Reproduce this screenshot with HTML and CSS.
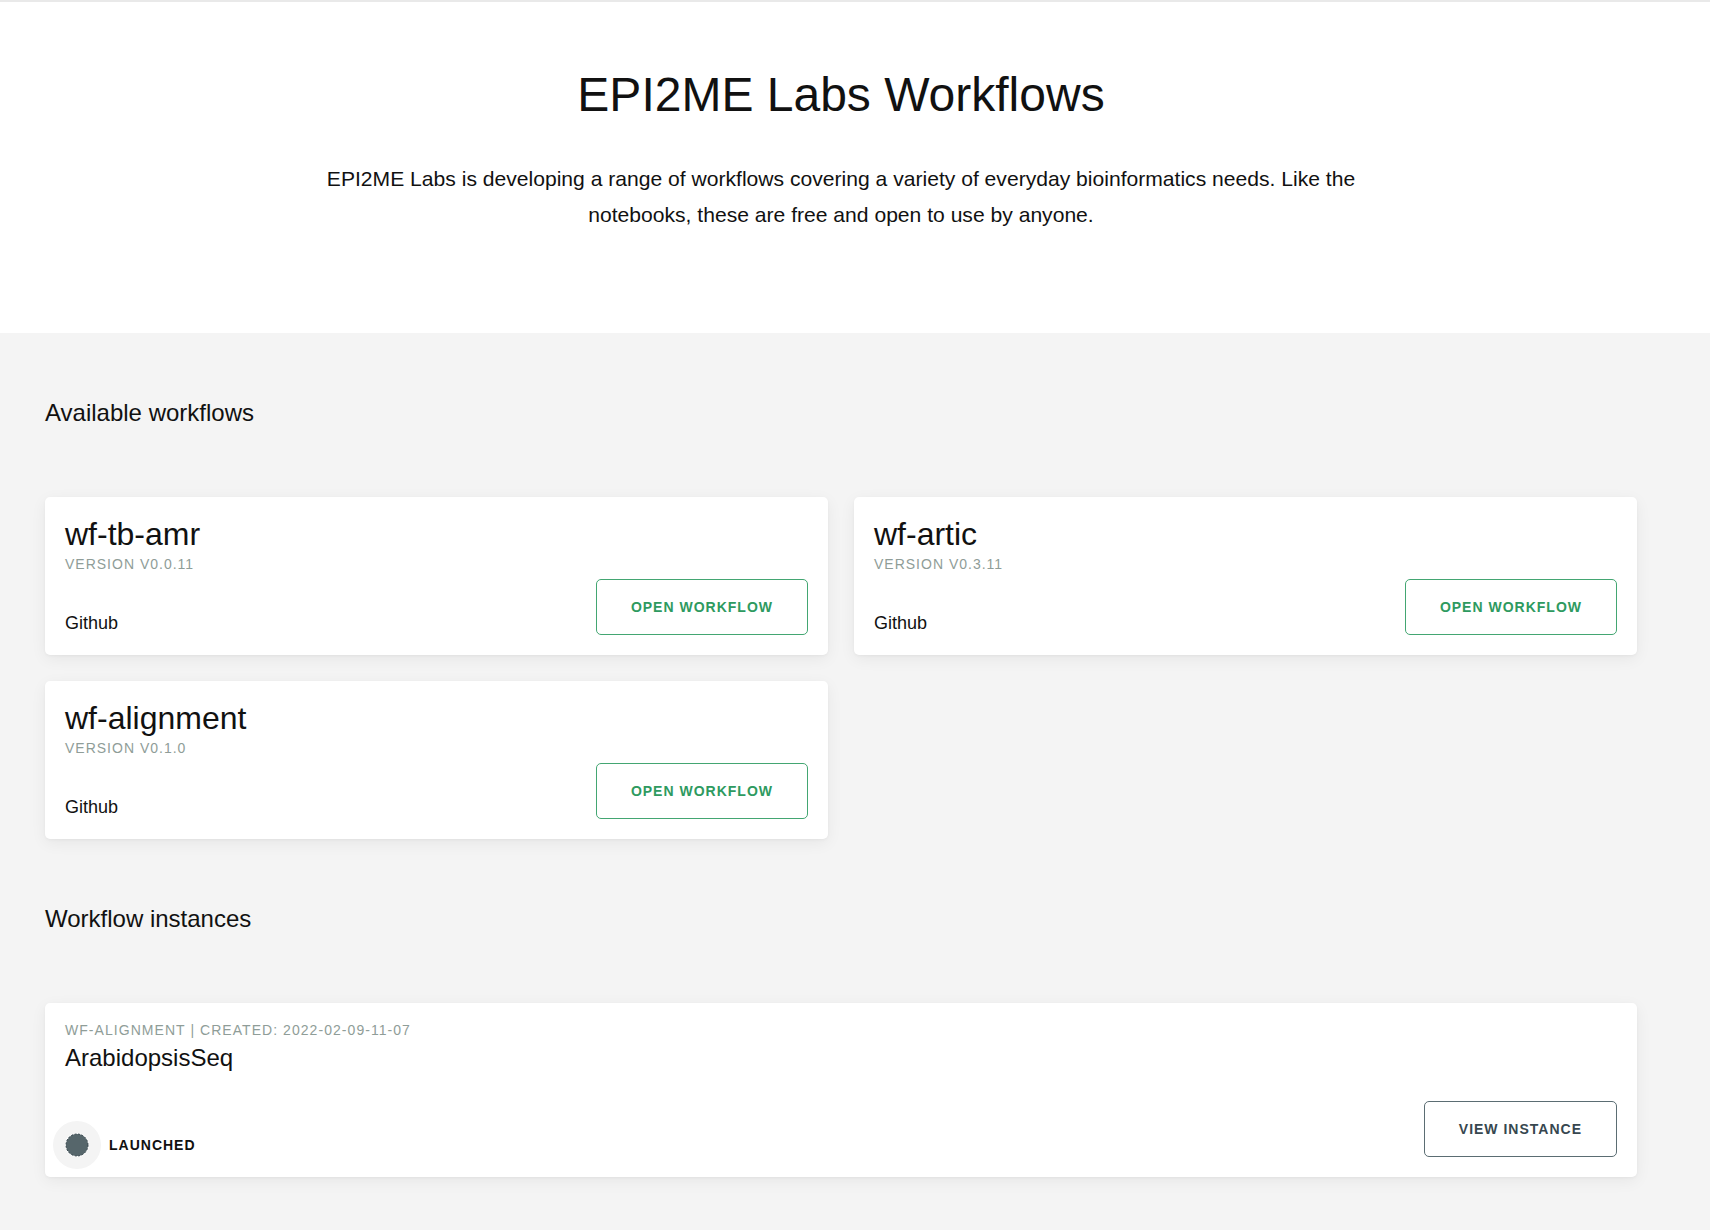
FILE: index.html
```html
<!DOCTYPE html>
<html lang="en">
<head>
<meta charset="utf-8">
<title>EPI2ME Labs Workflows</title>
<link rel="stylesheet" href="styles.css">
</head>
<body>
<header class="hero">
  <h1 class="hero-title">EPI2ME Labs Workflows</h1>
  <p class="hero-text">EPI2ME Labs is developing a range of workflows covering a variety of everyday bioinformatics needs. Like the notebooks, these are free and open to use by anyone.</p>
</header>
<main class="content">
  <section class="section">
    <h2 class="section-title">Available workflows</h2>
    <div class="workflow-grid">
      <div class="card workflow-card">
        <div class="workflow-info">
          <div class="workflow-name">wf-tb-amr</div>
          <div class="workflow-version">VERSION V0.0.11</div>
          <a class="workflow-link">Github</a>
        </div>
        <button class="btn btn-green">OPEN WORKFLOW</button>
      </div>
      <div class="card workflow-card">
        <div class="workflow-info">
          <div class="workflow-name">wf-artic</div>
          <div class="workflow-version">VERSION V0.3.11</div>
          <a class="workflow-link">Github</a>
        </div>
        <button class="btn btn-green">OPEN WORKFLOW</button>
      </div>
      <div class="card workflow-card">
        <div class="workflow-info">
          <div class="workflow-name">wf-alignment</div>
          <div class="workflow-version">VERSION V0.1.0</div>
          <a class="workflow-link">Github</a>
        </div>
        <button class="btn btn-green">OPEN WORKFLOW</button>
      </div>
    </div>
  </section>
  <section class="section section-instances">
    <h2 class="section-title">Workflow instances</h2>
    <div class="card instance-card">
      <div class="instance-meta">WF-ALIGNMENT | CREATED: 2022-02-09-11-07</div>
      <div class="instance-name">ArabidopsisSeq</div>
      <div class="instance-footer">
        <div class="status">
          <span class="status-icon">
            <svg width="24" height="24" viewBox="0 0 24 24"><circle cx="12" cy="12" r="11" fill="#56666b" stroke="#34434a" stroke-width="1" stroke-dasharray="2 1.5"/></svg>
          </span>
          <span class="status-label">LAUNCHED</span>
        </div>
        <button class="btn btn-slate">VIEW INSTANCE</button>
      </div>
    </div>
  </section>
</main>
</body>
</html>
```
FILE: styles.css
```css
* { box-sizing: border-box; }
html, body {
  margin: 0;
  padding: 0;
  background: #f4f4f4;
  font-family: "Liberation Sans", Arial, Helvetica, sans-serif;
  color: #111;
}
.hero {
  background: #fff;
  border-top: 2px solid #e9e9e9;
  padding: 64px 48px 100px 20px;
  text-align: center;
}
.hero-title {
  margin: 0;
  font-size: 48px;
  line-height: 58px;
  font-weight: 400;
  color: #111;
}
.hero-text {
  margin: 37px auto 0;
  max-width: 1080px;
  font-size: 21.1px;
  line-height: 36px;
  color: #111;
}
.content {
  padding: 66px 73px 60px 45px;
}
.section-instances {
  margin-top: 66px;
}
.section-title {
  margin: 0 0 70px;
  font-size: 24px;
  line-height: 28px;
  font-weight: 400;
  color: #111;
}
.workflow-grid {
  display: grid;
  grid-template-columns: 1fr 1fr;
  gap: 26px;
}
.card {
  background: #fff;
  border-radius: 5px;
  box-shadow: 0 4px 16px rgba(0, 0, 0, 0.06), 0 1px 3px rgba(0, 0, 0, 0.04);
  padding: 20px;
}
.workflow-card {
  display: flex;
  justify-content: space-between;
  align-items: flex-end;
}
.workflow-info {
  display: flex;
  flex-direction: column;
}
.workflow-name {
  font-size: 32px;
  line-height: 35px;
  color: #111;
}
.workflow-version {
  margin-top: 4px;
  font-size: 14px;
  line-height: 16px;
  letter-spacing: 1px;
  color: #8f9d98;
}
.workflow-link {
  margin-top: 40px;
  font-size: 18px;
  line-height: 23px;
  color: #111;
  text-decoration: none;
}
.btn {
  font-family: "Liberation Sans", Arial, Helvetica, sans-serif;
  font-size: 14px;
  font-weight: 700;
  letter-spacing: 1px;
  height: 56px;
  padding: 0 34px;
  background: #fff;
  border-radius: 5px;
  cursor: pointer;
}
.btn-green {
  color: #2e9a60;
  border: 1px solid #43a672;
}
.btn-slate {
  color: #37474f;
  border: 1px solid #5b6d73;
}
.instance-meta {
  font-size: 14px;
  line-height: 14px;
  letter-spacing: 1.05px;
  color: #8f9d98;
}
.instance-name {
  margin-top: 7px;
  font-size: 24px;
  line-height: 28px;
  color: #111;
}
.instance-footer {
  margin-top: 29px;
  display: flex;
  justify-content: space-between;
  align-items: flex-end;
}
.status {
  display: flex;
  align-items: center;
  gap: 20px;
}
.status-icon {
  width: 24px;
  height: 24px;
  border-radius: 50%;
  box-shadow: 0 0 0 12px #f4f4f4;
  display: flex;
}
.status-label {
  font-size: 14px;
  font-weight: 700;
  letter-spacing: 1px;
  line-height: 24px;
  color: #111;
}
```
